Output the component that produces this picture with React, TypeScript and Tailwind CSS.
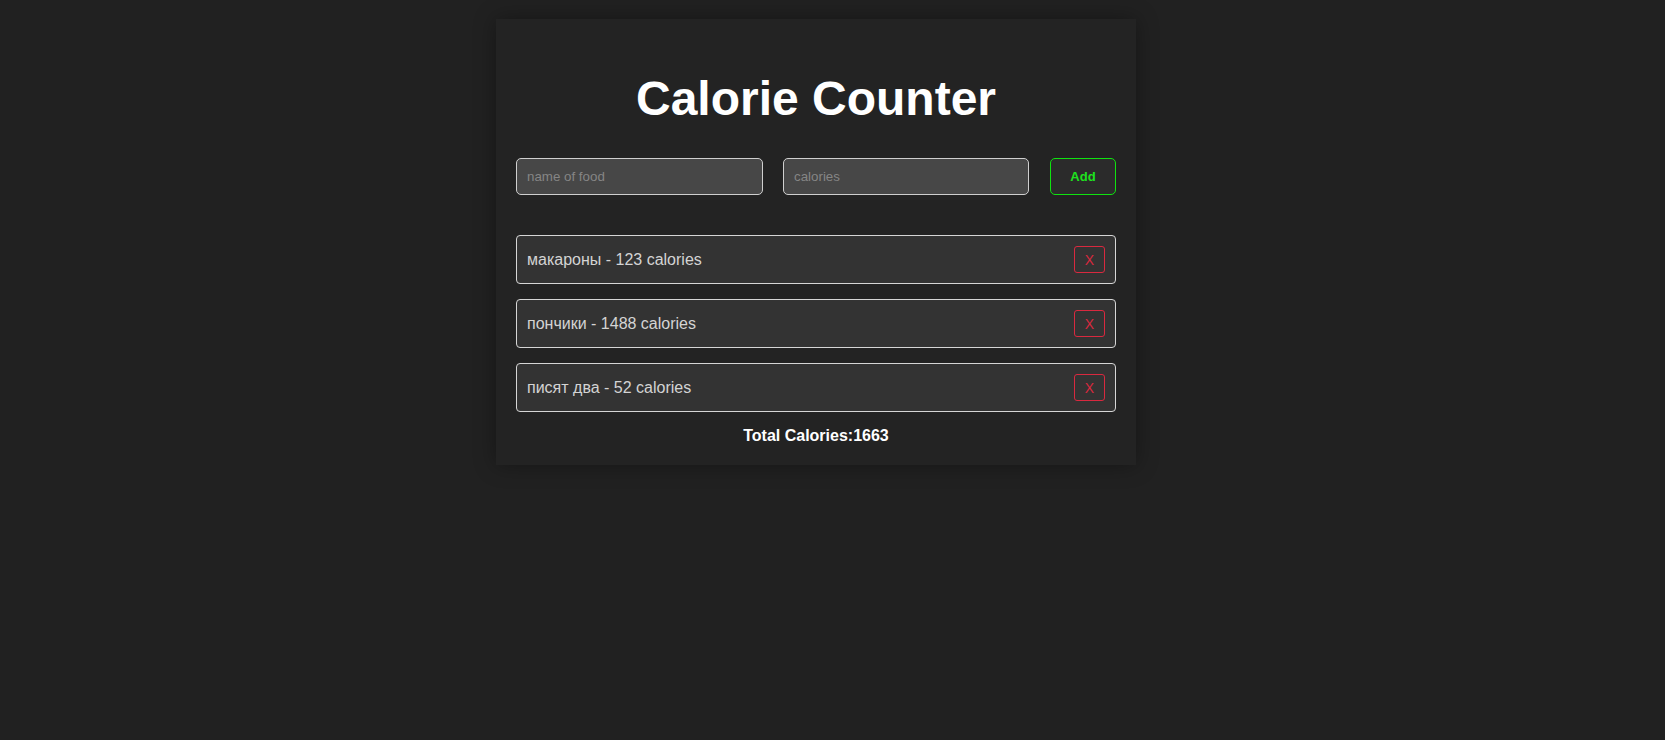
import { useState } from 'react';

type Food = { id: number; name: string; calories: number };

const initialFoods: Food[] = [
    { id: 1, name: 'макароны', calories: 123 },
    { id: 2, name: 'пончики', calories: 1488 },
    { id: 3, name: 'писят два', calories: 52 },
];

export default function App() {
    const [foods, setFoods] = useState<Food[]>(initialFoods);
    const [name, setName] = useState('');
    const [calories, setCalories] = useState('');

    const total = foods.reduce((sum, f) => sum + f.calories, 0);

    const addFood = () => {
        const value = parseInt(calories, 10);
        if (!name.trim() || isNaN(value)) return;
        setFoods([...foods, { id: Date.now(), name: name.trim(), calories: value }]);
        setName('');
        setCalories('');
    };

    return (
        <div className="min-h-screen w-full bg-[#212121] pt-[19px] pr-[33px] font-['Liberation_Sans',Arial,sans-serif]">
            <div className="mx-auto w-[640px] bg-[#232323] p-5 shadow-[0_0_20px_rgba(0,0,0,0.35)]">
                <h1 className="my-8 text-center text-5xl leading-[normal] font-bold text-white">Calorie Counter</h1>

                {/* input row */}
                <div className="flex items-center gap-5">
                    <input
                        value={name}
                        onChange={(e) => setName(e.target.value)}
                        placeholder="name of food"
                        className="h-[37px] w-[247px] rounded-[5px] border border-[#cfcfcf] bg-[#474747] px-[10px] text-[13.33px] text-[#ddd] outline-none placeholder:text-[#858585]"
                    />
                    <input
                        value={calories}
                        onChange={(e) => setCalories(e.target.value)}
                        placeholder="calories"
                        className="h-[37px] w-[246px] rounded-[5px] border border-[#cfcfcf] bg-[#474747] px-[10px] text-[13.33px] text-[#ddd] outline-none placeholder:text-[#858585]"
                    />
                    <button
                        onClick={addFood}
                        className="ml-auto h-[37px] w-[66px] rounded-[5px] border border-[#0fe30f] bg-[#2b2b2b] text-[13px] font-bold text-[#1ee11e]"
                    >
                        Add
                    </button>
                </div>

                {/* food list */}
                <ul className="mt-10 flex flex-col gap-[15px]">
                    {foods.map((food) => (
                        <li
                            key={food.id}
                            className="flex h-[49px] items-center justify-between rounded-[4px] border border-[#d6d6d6] bg-[#333333] px-[10px] text-base text-[#d4d4d4]"
                        >
                            <span>
                                {food.name} - {food.calories} calories
                            </span>
                            <button
                                onClick={() => setFoods(foods.filter((f) => f.id !== food.id))}
                                className="h-[27px] w-[31px] rounded-[3px] border border-[#d9293f] text-sm text-[#d9293f]"
                            >
                                X
                            </button>
                        </li>
                    ))}
                </ul>

                <p className="mt-[15px] text-center text-base leading-[18px] font-bold text-white">Total Calories:{total}</p>
            </div>
        </div>
    );
}
